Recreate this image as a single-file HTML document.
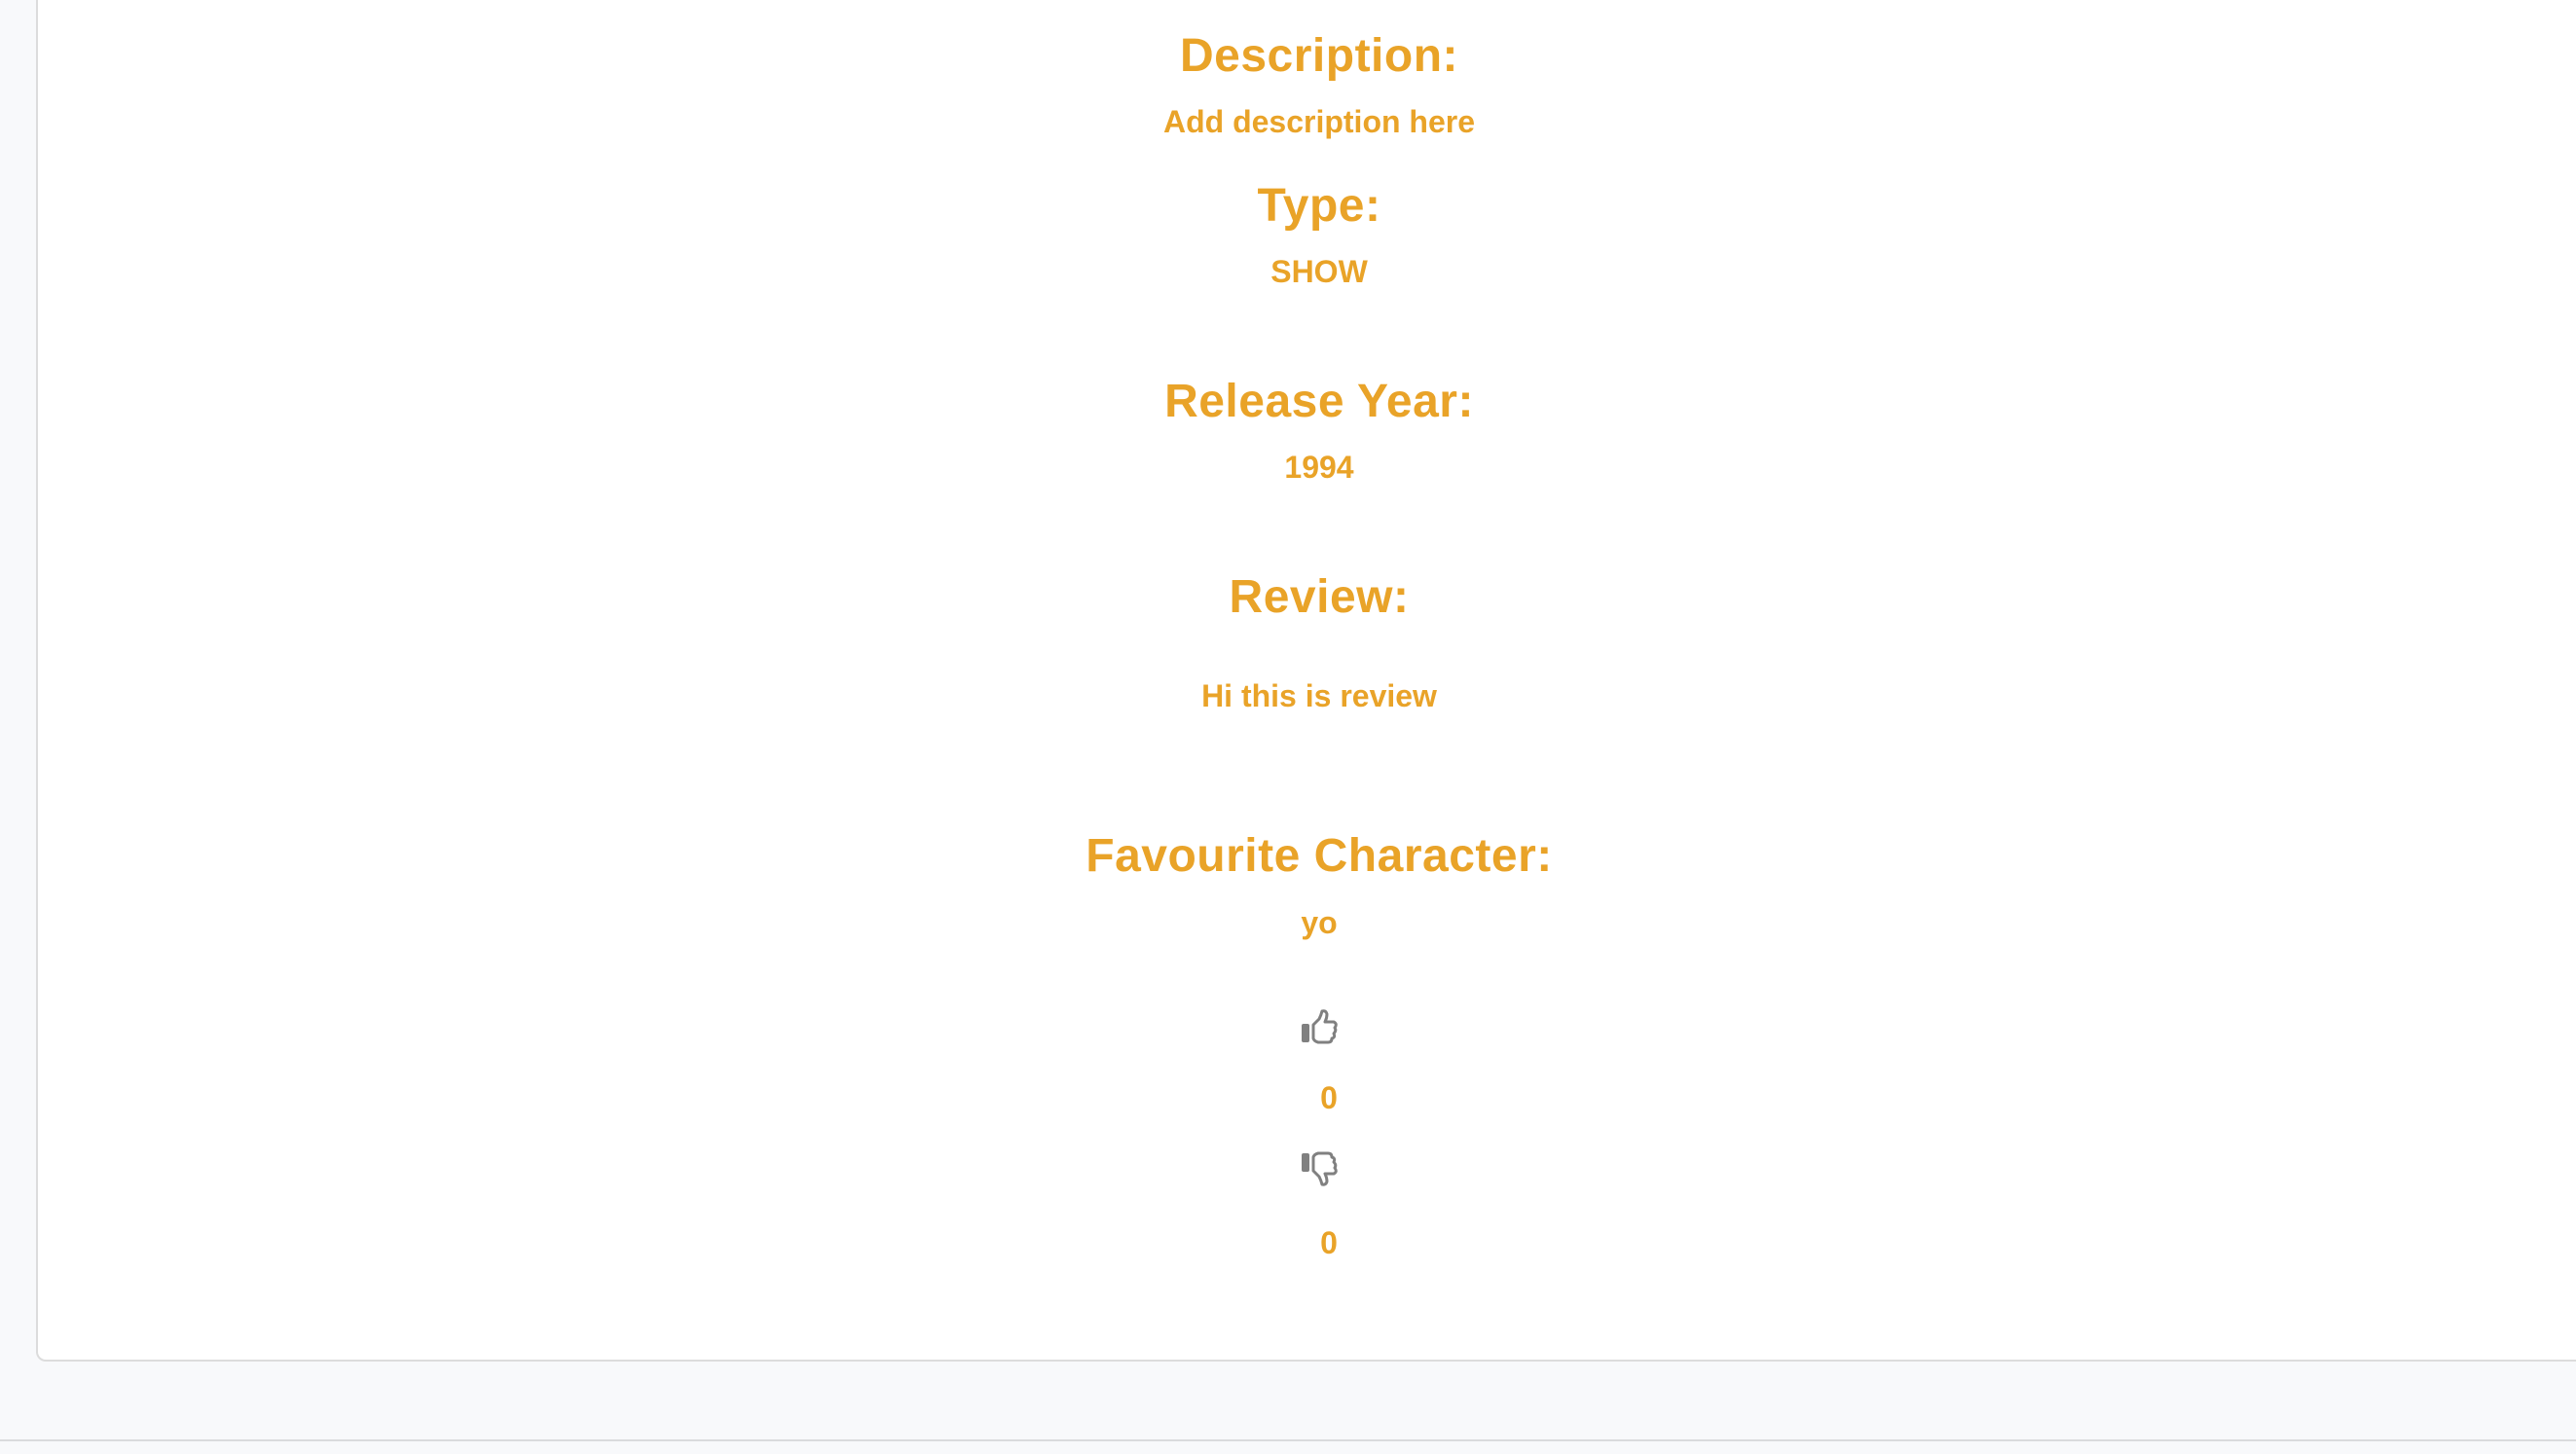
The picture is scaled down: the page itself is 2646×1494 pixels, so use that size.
<!DOCTYPE html>
<html><head><meta charset="utf-8"><style>
html,body{margin:0;padding:0;width:2646px;height:1494px;overflow:hidden;background:#f8f9fb;font-family:"Liberation Sans",sans-serif;}
.card{position:absolute;left:37px;top:-10px;width:2700px;height:1409px;background:#fff;border:2px solid #dcdcdc;border-radius:10px;box-sizing:border-box;}
.line{position:absolute;left:0;width:2646px;height:2px;top:1479px;background:#dadbdd;}
.t{position:absolute;left:0;width:2710px;text-align:center;color:#e9a328;font-weight:bold;line-height:1;white-space:nowrap;}
.t span{display:inline-block;}
.h{font-size:48px;letter-spacing:0.5px;}
.s{font-size:32px;}
.ic{position:absolute;left:1336px;width:40px;height:36px;}
</style></head><body>
<div class="card"></div>
<div class="line"></div>
<div class="t h" style="top:34px"><span>Description:</span></div>
<div class="t s" style="top:109px"><span>Add description here</span></div>
<div class="t h" style="top:188px"><span>Type:</span></div>
<div class="t s" style="top:263px"><span>SHOW</span></div>
<div class="t h" style="top:389px"><span>Release Year:</span></div>
<div class="t s" style="top:464px"><span>1994</span></div>
<div class="t h" style="top:590px"><span>Review:</span></div>
<div class="t s" style="top:699px"><span>Hi this is review</span></div>
<div class="t h" style="top:856px"><span>Favourite Character:</span></div>
<div class="t s" style="top:932px"><span>yo</span></div>
<svg class="ic" style="top:1037px" viewBox="0 0 40 36"><rect x="1" y="15" width="8" height="19" rx="2" fill="#808080"/><path d="M13 16 L19 10 Q21 6 22 2 Q26 1 27 5 Q27 9 25 13 L34 13 Q38 15 35 19 Q37 22 34 25 Q36 29 32 30 Q32 34 28 34 L18 34 Q14 33 13 30 Z" fill="none" stroke="#808080" stroke-width="3" stroke-linejoin="round"/></svg>
<div class="t s" style="top:1112px;left:20px;width:2690px"><span>0</span></div>
<svg class="ic" style="top:1183px" viewBox="0 0 40 36"><rect x="1" y="2" width="8" height="19" rx="2" fill="#808080"/><path d="M13 20 L19 26 Q21 30 22 34 Q26 35 27 31 Q27 27 25 23 L34 23 Q38 21 35 17 Q37 14 34 11 Q36 7 32 6 Q32 2 28 2 L18 2 Q14 3 13 6 Z" fill="none" stroke="#808080" stroke-width="3" stroke-linejoin="round"/></svg>
<div class="t s" style="top:1261px;left:20px;width:2690px"><span>0</span></div>
</body></html>
